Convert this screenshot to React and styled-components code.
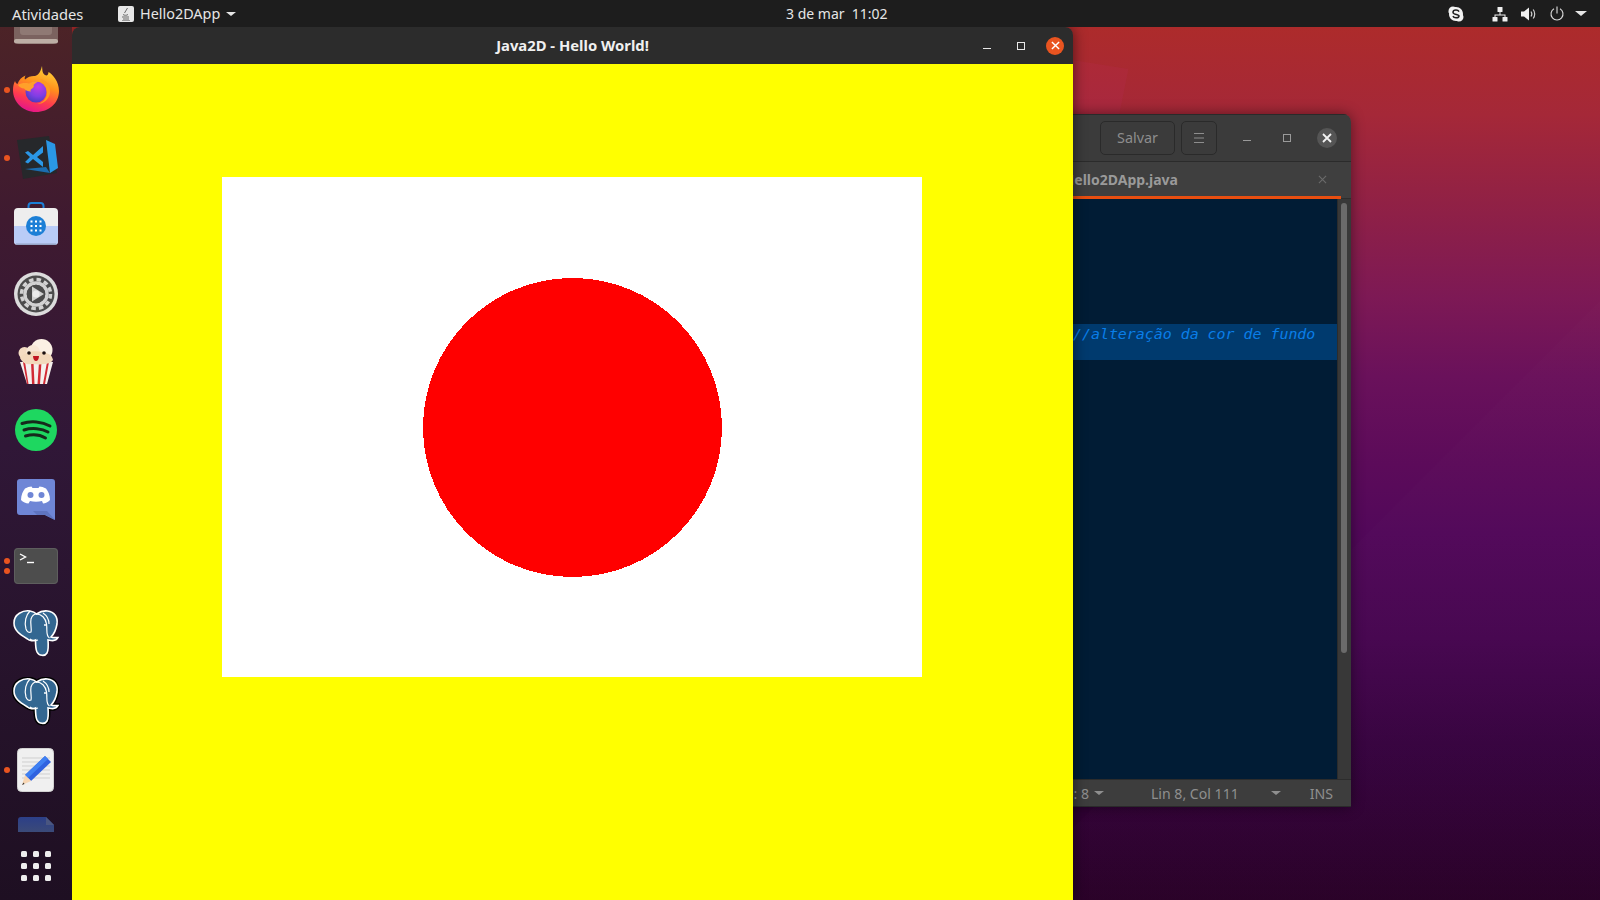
import React from 'react';
import styled, { createGlobalStyle } from 'styled-components';

const GlobalStyle = createGlobalStyle`
  html, body { margin: 0; padding: 0; width: 1600px; height: 900px; overflow: hidden; background: #000; }
  * { box-sizing: border-box; }
`;

const Screen = styled.div`
  width: 1600px;
  height: 900px;
  display: flex;
  flex-direction: column;
  overflow: hidden;
  font-family: "Noto Sans", "Open Sans", sans-serif;
`;

const TopBar = styled.header`
  height: 27px;
  flex: none;
  display: flex;
  align-items: center;
  background: #1d1d1d;
  color: #e6e6e6;
  font-size: 14px;
  position: relative;
  z-index: 3;
`;

const Activities = styled.span`
  margin-left: 12px;
  width: 106px;
  font-size: 14.7px;
`;

const AppMenu = styled.div`
  display: flex;
  align-items: center;
  width: 280px;
  gap: 6px;
  font-size: 14.4px;
`;

const Clock = styled.div`
  margin-left: 388px;
  white-space: pre;
`;

const Tray = styled.div`
  margin-left: auto;
  display: flex;
  align-items: center;
  padding-right: 13px;
`;

const TrayIcon = styled.span`
  display: flex;
  margin-left: ${p => p.$gap}px;
`;

const Body = styled.div`
  flex: 1;
  display: flex;
  min-height: 0;
`;

const Dock = styled.nav`
  width: 72px;
  flex: none;
  display: flex;
  flex-direction: column;
  background: linear-gradient(180deg, #4c2327 0%, #3f1a30 22%, #301737 48%, #26132b 75%, #1e0f22 100%);
`;

const DockScroll = styled.div`
  flex: 1;
  min-height: 0;
  overflow: hidden;
  display: flex;
  flex-direction: column;
`;

const DockList = styled.div`
  margin-top: -39px;
  display: flex;
  flex-direction: column;
`;

const DockItem = styled.div`
  height: 68px;
  flex: none;
  position: relative;
  display: flex;
  align-items: center;
  justify-content: center;
`;

const RunDots = styled.span`
  position: absolute;
  left: 4px;
  top: 50%;
  transform: translateY(-50%);
  display: flex;
  flex-direction: column;
  gap: 4px;
`;

const RunDot = styled.i`
  display: block;
  width: 6px;
  height: 6px;
  border-radius: 50%;
  background: #e95420;
`;

const AppsButton = styled.div`
  height: 68px;
  flex: none;
  display: grid;
  grid-template-columns: repeat(3, 6px);
  grid-template-rows: repeat(3, 6px);
  gap: 6px;
  align-content: center;
  justify-content: center;
`;

const AppsDot = styled.i`
  display: block;
  border-radius: 1.5px;
  background: #eeeeee;
`;

const Desktop = styled.main`
  flex: 1;
  position: relative;
  overflow: hidden;
  background:
    linear-gradient(135deg, transparent 0 75%, rgba(255, 255, 255, .009) 75.1%),
    linear-gradient(180deg, #ad2b2b 0%, #a52838 10%, #912145 20%, #7d1955 31%, #6a115b 40%, #5c0b5a 50%, #52085a 58%, #470650 70%, #370340 82%, #290027 100%);
`;

const WallShard = styled.div`
  position: absolute;
  left: 1000px;
  top: 30px;
  width: 60px;
  height: 60px;
  background: rgba(190, 50, 110, .13);
  clip-path: polygon(0 5%, 94% 20%, 78% 100%, 0 100%);
`;

const Window = styled.section`
  position: absolute;
  left: ${p => p.$left}px;
  top: ${p => p.$top}px;
  width: ${p => p.$width}px;
  height: ${p => p.$height}px;
  display: flex;
  flex-direction: column;
  border-radius: 8px 8px 0 0;
  overflow: hidden;
  box-shadow: 0 0 14px rgba(0, 0, 0, ${p => p.$shadow});
`;

const JavaTitle = styled.div`
  height: 37px;
  flex: none;
  background: #2c2c2c;
  color: #f0f0f0;
  font-size: 14.8px;
  font-weight: 700;
  padding-bottom: 2px;
  position: relative;
  display: flex;
  align-items: center;
  justify-content: center;
`;

const WindowButtons = styled.div`
  position: absolute;
  right: 9px;
  top: 0;
  bottom: 0;
  display: flex;
  align-items: center;
`;

const MinGlyph = styled.span`
  width: 8px;
  height: 1px;
  background: ${p => p.$color};
  margin-top: 5px;
  margin-right: 26px;
`;

const MaxGlyph = styled.span`
  width: 8px;
  height: 8px;
  border: 1px solid ${p => p.$color};
  margin-right: ${p => p.$after}px;
`;

const CloseCircle = styled.span`
  width: ${p => p.$size}px;
  height: ${p => p.$size}px;
  border-radius: 50%;
  background: ${p => p.$color};
  display: flex;
  align-items: center;
  justify-content: center;
`;

const JavaCanvas = styled.div`
  flex: 1;
  background: #ffff00;
  padding: 113px 0 0 150px;
`;

const WhitePanel = styled.div`
  width: 700px;
  height: 500px;
  background: #ffffff;
  display: flex;
  align-items: center;
  justify-content: center;
  padding: 2px 0 0 2px;
`;

const EditorHeader = styled.div`
  height: 48px;
  flex: none;
  background: #3b3b3b;
  border-bottom: 1px solid #2b2b2b;
  border-top: 1px solid #2a2a2a;
  display: flex;
  align-items: center;
  justify-content: flex-end;
  padding-right: 14px;
  color: #8d8d8d;
`;

const HeaderButton = styled.div`
  height: 34px;
  width: ${p => p.$width}px;
  margin-right: ${p => p.$after}px;
  border: 1px solid #2a2a2a;
  border-radius: 5px;
  font-size: 14.4px;
  line-height: 30px;
  padding-bottom: 1px;
  display: flex;
  align-items: center;
  justify-content: center;
`;

const EditorMin = styled.span`
  width: 8px;
  height: 1px;
  background: #9a9a9a;
  margin-top: 5px;
  margin-right: 32px;
`;

const TabRow = styled.div`
  height: 37px;
  flex: none;
  background: #3f3f3f;
  box-shadow: inset 0 -1px 0 #2e2e2e;
  padding-right: 10px;
`;

const Tab = styled.div`
  height: 37px;
  padding-top: 1px;
  border-bottom: 3px solid #e84e10;
  display: flex;
  align-items: center;
  justify-content: flex-end;
  color: #9a9a9a;
  font-size: 14px;
  font-weight: 700;
  padding-right: 14px;
`;

const TabName = styled.span`
  margin-right: 140px;
`;

const EditorMiddle = styled.div`
  flex: 1;
  min-height: 0;
  display: flex;
`;

const CodeArea = styled.div`
  flex: 1;
  min-width: 0;
  overflow: hidden;
  background: #011c35;
  padding-top: 125px;
`;

const CurrentLine = styled.div`
  height: 36px;
  background: #003a6e;
  color: #0a7ee8;
  font-family: "DejaVu Sans Mono", monospace;
  font-style: italic;
  font-size: 14.92px;
  line-height: 20px;
  padding-left: 141px;
  white-space: pre;
`;

const ScrollTrack = styled.div`
  width: 14px;
  flex: none;
  background: #383838;
  border-left: 1px solid #2c2c2c;
  padding: 4px 4px 0 3px;
`;

const ScrollThumb = styled.div`
  height: 450px;
  border-radius: 3px;
  background: #6a6a6a;
`;

const StatusBar = styled.div`
  height: 28px;
  flex: none;
  background: #3d3d3d;
  border-top: 1px solid #2c2c2c;
  border-bottom: 1px solid #2a2a2a;
  display: flex;
  align-items: center;
  justify-content: flex-end;
  padding-right: 18px;
  color: #8f8f8f;
  font-size: 14.1px;
`;

const StatusCell = styled.span`
  display: flex;
  align-items: center;
  margin-right: ${p => p.$after}px;
  white-space: pre;
`;

const Caret = styled.i`
  display: block;
  width: 0;
  height: 0;
  margin-left: ${p => p.$gap}px;
  border-left: ${p => p.$size}px solid transparent;
  border-right: ${p => p.$size}px solid transparent;
  border-top: ${p => p.$size - 1}px solid ${p => p.$color};
`;

const XIcon = ({ size = 10, color = '#fff', width = 1.6 }) => (
  <svg width={size} height={size} viewBox="0 0 10 10">
    <path d="M1 1 9 9M9 1 1 9" stroke={color} strokeWidth={width} fill="none" />
  </svg>
);

const JavaIcon = () => (
  <svg width="16" height="16" viewBox="0 0 16 16">
    <rect width="16" height="16" rx="2" fill="#e8e8e8" />
    <path d="M9.5 2 6.5 7M5 8.5c1 1 4 1 5 0M4 11h7M5 13h6" stroke="#6b6b6b" strokeWidth="1" fill="none" />
    <path d="M4 14.5h8" stroke="#9a9a9a" strokeWidth="1" />
  </svg>
);

const SkypeIcon = () => (
  <svg width="16" height="16" viewBox="0 0 16 16">
    <path d="M5 .5c1 0 1.6.4 2.2.6C7.5 1 7.7 1 8 1c4 0 7 3 7 7 0 .4 0 .7-.1 1 .3.6.6 1.2.6 2 0 2.5-2 4.5-4.5 4.5-.8 0-1.4-.3-2-.6-.3.1-.6.1-1 .1-4 0-7-3-7-7 0-.3 0-.5.1-.8C.3 6.6.5 5.8.5 5 .5 2.5 2.5.5 5 .5z" fill="#f2f2f2" />
    <path d="M11 5.6C10.5 4.5 9.4 4 8 4 6.3 4 5 4.8 5 6.2c0 3 6 1.6 6 3.8 0 1-1.2 1.8-3 1.8-1.5 0-2.6-.6-3.1-1.7" stroke="#1d1d1d" strokeWidth="1.5" fill="none" />
  </svg>
);

const NetworkIcon = () => (
  <svg width="16" height="16" viewBox="0 0 16 16" fill="#f0f0f0">
    <rect x="5.5" y="1" width="5" height="5" rx=".5" />
    <rect x="0.5" y="11" width="5" height="4.5" rx=".5" />
    <rect x="10.5" y="11" width="5" height="4.5" rx=".5" />
    <path d="M7.5 6h1v2.5H13.500V11h-1V9.500h-9V11h-1V8.500h5z" />
  </svg>
);

const VolumeIcon = () => (
  <svg width="15" height="16" viewBox="0 0 15 16">
    <path d="M0 5.5h3L8 1.5v13l-5-4H0z" fill="#f0f0f0" />
    <path d="M10 5.5c1 1.5 1 3.5 0 5M12.2 3.5c2 2.5 2 6.5 0 9" stroke="#cfcfcf" strokeWidth="1.2" fill="none" />
  </svg>
);

const PowerIcon = () => (
  <svg width="14" height="15" viewBox="0 0 14 15">
    <path d="M4 2.8a6 6 0 1 0 6 0M7 .5v7" stroke="#dcdcdc" strokeWidth="1.1" fill="none" />
  </svg>
);

const FilesIcon = () => (
  <svg width="48" height="48" viewBox="0 0 48 48">
    <rect x="2" y="0" width="44" height="46" rx="5" fill="#7b625f" />
    <path d="M8 20h32v14a3 3 0 0 1-3 3H11a3 3 0 0 1-3-3z" fill="#8f7974" />
    <rect x="2" y="41" width="44" height="4.5" rx="2" fill="#bdaea5" />
  </svg>
);

const FirefoxIcon = () => (
  <svg width="48" height="48" viewBox="0 0 48 48">
    <defs>
      <linearGradient id="ffBase" x1="0.7" y1="0" x2="0.35" y2="1">
        <stop offset="0" stopColor="#ffd83a" />
        <stop offset="0.4" stopColor="#ff8f1c" />
        <stop offset="0.72" stopColor="#ff3b4f" />
        <stop offset="1" stopColor="#e3148d" />
      </linearGradient>
      <radialGradient id="ffGlobe" cx="0.6" cy="0.25" r="0.85">
        <stop offset="0" stopColor="#c23be4" />
        <stop offset="0.55" stopColor="#7e3ee4" />
        <stop offset="1" stopColor="#3c3ab5" />
      </radialGradient>
    </defs>
    <path d="M30 0c.5 4 0 7 3 9 2 1.3 3.5-.5 3.5-3 4 2.5 10.500 9 10.500 19 0 12-10 21-23 21S1 36 1 24c0-3 .5-6 2-9 .5 1.500 1.200 2.500 2.500 3 1.500-4 4-7 8-8.500-1 2-1 3-.5 4 2.500-2.500 6-3.500 9-3.500 3 0 6-2 8-10z" fill="url(#ffBase)" />
    <circle cx="24" cy="26" r="10.5" fill="url(#ffGlobe)" />
    <path d="M6 19c3-2 7-2.500 11-1.500 3-1.500 6-2.500 9-2-1.500 1-3 2-4.500 3.500 1 1 0 3-2 4-1 .5-1.500 1.500-.5 2.500-3 0-5.500-1-7-3-2.500 0-4.500-1.500-6-3.500z" fill="#ffa02a" />
    <path d="M28 13c7 1 11 7 10 14-1 6-6 11-13 11 5-1 10-5 10-11 0-6-3-10-7-14z" fill="#ff9a1e" />
  </svg>
);

const VscodeIcon = () => (
  <svg width="48" height="48" viewBox="0 0 48 48">
    <path d="M5 6 37 2l8 37-34 6z" fill="#26282b" />
    <path d="M34 6l9 4 3 24-8 5z" fill="#2a97e6" />
    <path d="M38 39 13 35l16-1.5L34 33z" fill="#1b6db0" />
    <path d="M31 12 21 21l-5-4-3 1.5L18 23l-5 5 3 1.500 5-4.500 10 8z" fill="#2a97e6" />
    <path d="M31 18.5 25 23l6 5z" fill="#26282b" />
  </svg>
);

const StoreIcon = () => (
  <svg width="48" height="48" viewBox="0 0 48 48">
    <path d="M16.5 7V4a3 3 0 0 1 3-3h9a3 3 0 0 1 3 3v3" fill="none" stroke="#1c7fd6" strokeWidth="2" />
    <rect x="2" y="6" width="44" height="37" rx="4" fill="#eeeeee" />
    <path d="M2 24h44v15a4 4 0 0 1-4 4H6a4 4 0 0 1-4-4z" fill="#b9ccf7" />
    <rect x="4" y="41.5" width="40" height="1.5" fill="#7f8aa5" opacity=".6" />
    <circle cx="24" cy="24" r="10" fill="#1c7fd6" />
    <g fill="#ffffff">
      {[19.5, 24, 28.5].flatMap(x => [19.5, 24, 28.5].map(y => <rect key={`${x}-${y}`} x={x - 1} y={y - 1} width="2" height="2" />))}
    </g>
  </svg>
);

const SettingsIcon = () => (
  <svg width="48" height="48" viewBox="0 0 48 48">
    <circle cx="24" cy="24" r="22" fill="#dcdcdc" />
    <circle cx="24" cy="24" r="18.5" fill="#4c4c4c" />
    <circle cx="24" cy="24" r="14.5" fill="none" stroke="#d2d2d2" strokeWidth="3.5" strokeDasharray="4.5 3.1" />
    <circle cx="24" cy="24" r="11" fill="none" stroke="#d2d2d2" strokeWidth="3.5" />
    <circle cx="24" cy="24" r="9.3" fill="#4c4c4c" />
    <path d="M20 16.5 32 24l-12 7.5z" fill="#d2d2d2" />
    <circle cx="24" cy="24" r="3.5" fill="#ececec" />
  </svg>
);

const PopcornIcon = () => (
  <svg width="48" height="48" viewBox="0 0 48 48">
    <path d="M8 24h33l-6 22H15z" fill="#f4f0ee" />
    <path d="M11 24h2l3.5 22H15zM19 24h2.5l1 22h-2.500zM27 24h2.500l-1.500 22h-2.500zM35 24h2l-4 22h-2z" fill="#d22a35" />
    <circle cx="29.5" cy="12" r="11" fill="#fbf1e4" />
    <circle cx="12.5" cy="15" r="6" fill="#f4dcc2" />
    <circle cx="21" cy="14" r="7" fill="#f8e8d6" />
    <path d="M8 20c4-6 14-8 22-6 5 1 10 2 11 8-2 3-6 4-9 4-5 1-8 0-12 0-4 1-9 0-12-6z" fill="#f2d9bc" />
    <circle cx="17" cy="15" r="1.8" fill="#1a1010" />
    <circle cx="32" cy="15" r="1.8" fill="#1a1010" />
    <path d="M21 18h6c0 3-1.5 5-3 5s-3-2-3-5z" fill="#c01722" />
  </svg>
);

const SpotifyIcon = () => (
  <svg width="48" height="48" viewBox="0 0 48 48">
    <circle cx="24" cy="24" r="21" fill="#1ed760" />
    <path d="M10 17.5c9-3 20-2 28 2.500M12 24c8-2.500 18-1.500 24 2M13.500 30c7-2 15-1 20 2" fill="none" stroke="#162a1c" strokeWidth="3" strokeLinecap="round" />
  </svg>
);

const DiscordIcon = () => (
  <svg width="48" height="48" viewBox="0 0 48 48">
    <path d="M8 5h32a3 3 0 0 1 3 3v38l-10-5H8a3 3 0 0 1-3-3V8a3 3 0 0 1 3-3z" fill="#6f86d6" />
    <path d="M43 46 33 41H25l-4-4h14z" fill="#5f74c0" />
    <path d="M9 26c0-5 2-9 4-11.500 2.500-1.200 4.500-1.800 6.500-2l1 1.500h6l1-1.500c2 .2 4 .8 6.500 2 2 2.500 4 6.500 4 11.500-2 2-4.500 3.500-7 3.500L30 27c-3.500 1-8.500 1-12 0l-1.500 2.500C14 29.500 11 28 9 26z" fill="#ffffff" />
    <circle cx="18.5" cy="21" r="3" fill="#6f86d6" />
    <circle cx="29.5" cy="21" r="3" fill="#6f86d6" />
  </svg>
);

const TerminalIcon = () => (
  <svg width="48" height="48" viewBox="0 0 48 48">
    <rect x="2" y="6" width="44" height="36" rx="4" fill="#4d4d4d" />
    <rect x="2.5" y="6.5" width="43" height="35" rx="3.5" fill="none" stroke="#5e5e5e" />
    <path d="M8 12 13.5 15 8 18" fill="none" stroke="#fff" strokeWidth="1.4" />
    <path d="M15 20.5h7" stroke="#fff" strokeWidth="1.4" />
  </svg>
);

const elephantPath = 'M2 14C2 5 11 1 18 2c3 .5 5 1.500 6.500 3 3-2 7-3.500 11-3 7 1 10.500 6 9.500 13-1 6-4 11-6 13 2 1 5 .5 7 .5-1 2-4 3.500-7 3l-3-.5c.5 6 .5 10-1 13-2 3.500-8 3-10-1-1.500-3-1.500-7-1.500-12-2 1-6 1-8-1C7 25 2 21 2 14z';

const ElephantIcon = ({ halo }) => (
  <svg width="48" height="50" viewBox="0 0 48 50">
    {halo && <path d={elephantPath} fill="#000" stroke="#000" strokeWidth="4.5" />}
    <path d={elephantPath} fill="#336791" stroke="#ffffff" strokeWidth="1.6" />
    <path d="M18 2c-4 4-6 11-4 18 1 3 3 4 5 3 1-3-1-8 0-13 1-3 3-5 5.500-5M24.500 5c5 0 9 4 10 10 1 6-1 12 3 14M26 31c-3 1-6 1-8-1M31 4c3 2 6 6 6 11" fill="none" stroke="#ffffff" strokeWidth="1.2" />
    <circle cx="33" cy="16" r="1" fill="#fff" />
  </svg>
);

const EditIcon = () => (
  <svg width="48" height="48" viewBox="0 0 48 48">
    <rect x="5.5" y="2.5" width="36" height="43" rx="4" fill="#f0f0f0" stroke="#d2d2d2" />
    <path d="M10 12h28M10 16h28M10 20h28M10 24h28M10 28h28M10 32h28" stroke="#cfcfcf" strokeWidth="1" />
    <path d="M33 10 39 16 19 35 13 29z" fill="#2f62e0" />
    <path d="M33 10 36 13 16 32 13 29z" fill="#3f80f2" />
    <path d="M13 29 19 35 10 39z" fill="#f7d6b4" />
    <path d="M11.5 36.5 10 39l2.5-1z" fill="#333" />
  </svg>
);

const DriveIcon = () => (
  <svg width="48" height="48" viewBox="0 0 48 48">
    <defs>
      <linearGradient id="driveG" x1="0" y1="0" x2="0" y2="0.35">
        <stop offset="0" stopColor="#2c3f88" />
        <stop offset="1" stopColor="#3b4a78" />
      </linearGradient>
    </defs>
    <path d="M9 3h25l8 8v35H6V6a3 3 0 0 1 3-3z" fill="url(#driveG)" />
    <path d="M34 3l8 8h-8z" fill="#4a5680" />
  </svg>
);

const dockApps = [
  { name: 'files', Icon: FilesIcon, dots: 0 },
  { name: 'firefox', Icon: FirefoxIcon, dots: 1 },
  { name: 'vscode', Icon: VscodeIcon, dots: 1 },
  { name: 'store', Icon: StoreIcon, dots: 0 },
  { name: 'settings', Icon: SettingsIcon, dots: 0 },
  { name: 'popcorn', Icon: PopcornIcon, dots: 0 },
  { name: 'spotify', Icon: SpotifyIcon, dots: 0 },
  { name: 'discord', Icon: DiscordIcon, dots: 0 },
  { name: 'terminal', Icon: TerminalIcon, dots: 2 },
  { name: 'pgadmin', Icon: ElephantIcon, dots: 0 },
  { name: 'pgadmin-2', Icon: () => <ElephantIcon halo />, dots: 0 },
  { name: 'gedit', Icon: EditIcon, dots: 1 },
  { name: 'drive', Icon: DriveIcon, dots: 0 },
];

const App = () => (
  <Screen>
    <GlobalStyle />
    <TopBar>
      <Activities>Atividades</Activities>
      <AppMenu>
        <JavaIcon />
        <span>Hello2DApp</span>
        <Caret $gap={0} $size={5} $color="#e6e6e6" />
      </AppMenu>
      <Clock>3 de mar  11:02</Clock>
      <Tray>
        <TrayIcon $gap={0}><SkypeIcon /></TrayIcon>
        <TrayIcon $gap={28}><NetworkIcon /></TrayIcon>
        <TrayIcon $gap={13}><VolumeIcon /></TrayIcon>
        <TrayIcon $gap={14}><PowerIcon /></TrayIcon>
        <Caret $gap={11} $size={6} $color="#e6e6e6" />
      </Tray>
    </TopBar>
    <Body>
      <Dock>
        <DockScroll>
          <DockList>
            {dockApps.map(({ name, Icon, dots }) => (
              <DockItem key={name}>
                {dots > 0 && (
                  <RunDots>
                    {Array.from({ length: dots }, (_, i) => <RunDot key={i} />)}
                  </RunDots>
                )}
                <Icon />
              </DockItem>
            ))}
          </DockList>
        </DockScroll>
        <AppsButton>
          {Array.from({ length: 9 }, (_, i) => <AppsDot key={i} />)}
        </AppsButton>
      </Dock>
      <Desktop>
        <WallShard />
        <Window $left={860} $top={87} $width={419} $height={693} $shadow={0.45}>
          <EditorHeader>
            <HeaderButton $width={75} $after={6}>Salvar</HeaderButton>
            <HeaderButton $width={36} $after={26}>
              <svg width="14" height="12" viewBox="0 0 14 12">
                <path d="M2 1.5h10M2 6h10M2 10.5h10" stroke="#8d8d8d" strokeWidth="1" />
              </svg>
            </HeaderButton>
            <EditorMin />
            <MaxGlyph $color="#9a9a9a" $after={26} />
            <CloseCircle $size={20} $color="#555555"><XIcon size={10} color="#f2f2f2" width={1.8} /></CloseCircle>
          </EditorHeader>
          <TabRow>
            <Tab>
              <TabName>Hello2DApp.java</TabName>
              <XIcon size={9} color="#6b6b6b" width={1.2} />
            </Tab>
          </TabRow>
          <EditorMiddle>
            <CodeArea>
              <CurrentLine>//alteração da cor de fundo</CurrentLine>
            </CodeArea>
            <ScrollTrack><ScrollThumb /></ScrollTrack>
          </EditorMiddle>
          <StatusBar>
            <StatusCell $after={47}>Largura da tabulação: 8<Caret $gap={5} $size={5} $color="#8f8f8f" /></StatusCell>
            <StatusCell $after={29}>Lin 8, Col 111<Caret $gap={32} $size={5} $color="#8f8f8f" /></StatusCell>
            <StatusCell $after={0}>INS</StatusCell>
          </StatusBar>
        </Window>
        <Window $left={0} $top={0} $width={1001} $height={873} $shadow={0.55}>
          <JavaTitle>
            Java2D - Hello World!
            <WindowButtons>
              <MinGlyph $color="#e8e8e8" />
              <MaxGlyph $color="#e8e8e8" $after={21} />
              <CloseCircle $size={18} $color="#e95420"><XIcon size={9} color="#ffffff" width={1.6} /></CloseCircle>
            </WindowButtons>
          </JavaTitle>
          <JavaCanvas>
            <WhitePanel>
              <svg width="300" height="300" viewBox="0 0 300 300" shapeRendering="crispEdges">
                <circle cx="149.5" cy="149.5" r="149.5" fill="#ff0000" />
              </svg>
            </WhitePanel>
          </JavaCanvas>
        </Window>
      </Desktop>
    </Body>
  </Screen>
);

export default App;
